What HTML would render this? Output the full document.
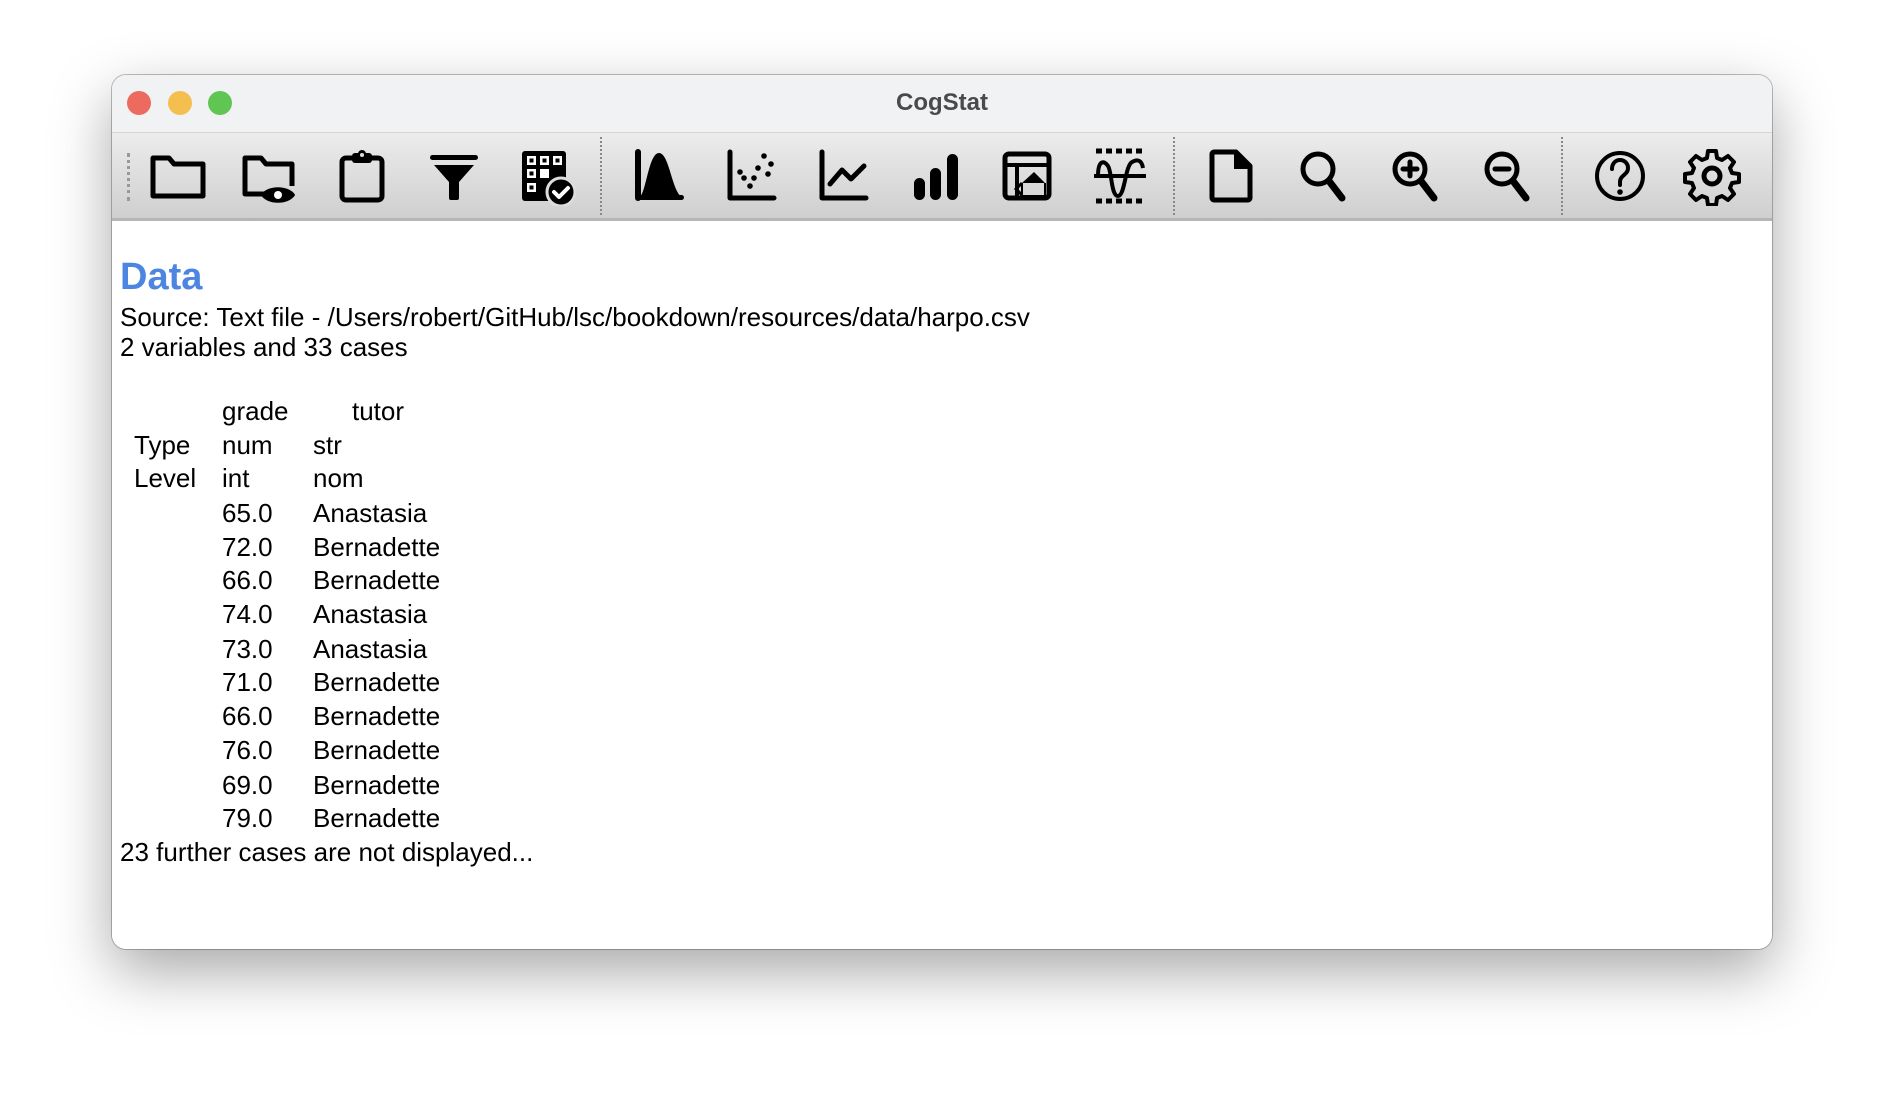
<!DOCTYPE html>
<html><head><meta charset="utf-8"><style>
body{margin:0;width:1884px;height:1100px;background:#fff;position:relative;overflow:hidden;font-family:"Liberation Sans",Arial,sans-serif}
.win{position:absolute;left:112px;top:75px;width:1660px;height:874px;border-radius:14px;background:#fff;box-shadow:0 22px 60px rgba(0,0,0,.35),0 0 0 1px rgba(0,0,0,.25);overflow:hidden}
.title{position:absolute;left:0;top:0;width:100%;height:57px;background:#f1f2f4;border-bottom:1px solid #d6d6d6}
.title span{position:absolute;left:0;width:100%;text-align:center;top:14px;font-size:24px;font-weight:bold;color:#4a4a4a}
.dot{position:absolute;top:16px;width:24px;height:24px;border-radius:50%}
.tb{position:absolute;left:0;top:58px;width:100%;height:85px;background:linear-gradient(#ececec,#cfcfcf);border-bottom:3px solid #b5b5b5}
.sep{position:absolute;top:4px;height:78px;border-left:2px dotted #888}
.ic{position:absolute;top:13px;width:60px;height:60px}
.content{position:absolute;left:0;top:146px;width:100%;bottom:0;background:#fff}
.l{position:absolute;font-size:26px;line-height:30px;color:#000;white-space:nowrap}
</style></head><body>
<div class="win">
<div class="title"><div class="dot" style="left:15px;background:#ed6a5e"></div><div class="dot" style="left:56px;background:#f5bf4f"></div><div class="dot" style="left:96px;background:#61c554"></div><span>CogStat</span></div>
<div class="tb">
<div class="sep" style="left:15px;border-left:3px dotted #999;height:48px;top:20px"></div>
<div class="sep" style="left:488px"></div><div class="sep" style="left:1061px"></div><div class="sep" style="left:1449px"></div>
<svg class="ic" style="left:36px" viewBox="0 0 60 60" fill="none" stroke="#000" stroke-width="5" stroke-linejoin="round"><path d="M5 12h16l5 6h29v32H5z"/></svg>
<svg class="ic" style="left:128px" viewBox="0 0 60 60" stroke="#000" stroke-width="5" stroke-linejoin="round"><path d="M28 48H5V12h16l5 6h26v22" fill="none"/><path d="M22 49c6-9 26-9 32 0c-6 9-26 9-32 0z" fill="#000" stroke-width="2"/><circle cx="38" cy="49" r="4" fill="#fff" stroke="none"/></svg>
<svg class="ic" style="left:220px" viewBox="0 0 60 60"><rect x="10" y="12" width="40" height="42" rx="4" fill="none" stroke="#000" stroke-width="5"/><rect x="20" y="7" width="20" height="10" rx="3" fill="#000"/><circle cx="30" cy="8" r="4" fill="#000"/><circle cx="30" cy="9" r="2" fill="#ddd"/></svg>
<svg class="ic" style="left:312px" viewBox="0 0 60 60"><rect x="6" y="9" width="48" height="5" rx="2.5"/><path d="M10 19h40L35 36v16a2 2 0 0 1-2 2h-6a2 2 0 0 1-2-2V36z"/></svg>
<svg class="ic" style="left:404px" viewBox="0 0 60 60"><rect x="6" y="5" width="44" height="50" rx="3"/><g fill="#fff"><rect x="11" y="10" width="9" height="9"/><rect x="24" y="10" width="9" height="9"/><rect x="37" y="10" width="9" height="9"/><rect x="11" y="23" width="9" height="9"/><rect x="24" y="23" width="9" height="9"/><rect x="11" y="37" width="9" height="9"/></g><g fill="#000"><rect x="13.5" y="12.5" width="4" height="4"/><rect x="26.5" y="12.5" width="4" height="4"/><rect x="39.5" y="12.5" width="4" height="4"/><rect x="13.5" y="25.5" width="4" height="4"/><rect x="13.5" y="39.5" width="4" height="4"/></g><circle cx="45" cy="46" r="14" fill="#000" stroke="#ddd" stroke-width="3"/><path d="M38 46l5 5 9-9" fill="none" stroke="#fff" stroke-width="4" stroke-linecap="round" stroke-linejoin="round"/></svg>
<svg class="ic" style="left:518px" viewBox="0 0 60 60"><path d="M8 6v46" stroke="#000" stroke-width="6" stroke-linecap="round"/><path d="M8 52C16 52 18 7 29 7S42 50 54 52z"/><rect x="6" y="49" width="48" height="5" rx="2.5"/></svg>
<svg class="ic" style="left:610px" viewBox="0 0 60 60"><path d="M8 6v46h44" fill="none" stroke="#000" stroke-width="5" stroke-linecap="round" stroke-linejoin="round"/><g fill="#000"><circle cx="42" cy="10" r="2.8"/><circle cx="49" cy="18" r="2.8"/><circle cx="36" cy="22" r="2.8"/><circle cx="46" cy="28" r="2.8"/><circle cx="22" cy="32" r="2.8"/><circle cx="32" cy="32" r="2.8"/><circle cx="28" cy="40" r="2.8"/><circle cx="18" cy="26" r="2.8"/></g></svg>
<svg class="ic" style="left:702px" viewBox="0 0 60 60" fill="none" stroke="#000" stroke-width="5" stroke-linecap="round" stroke-linejoin="round"><path d="M8 6v46h44"/><path d="M16 38l12-14 9 9 13-13"/></svg>
<svg class="ic" style="left:794px" viewBox="0 0 60 60"><rect x="8" y="32" width="11" height="22" rx="5.5"/><rect x="24" y="22" width="11" height="32" rx="5.5"/><rect x="41" y="8" width="11" height="46" rx="5.5"/></svg>
<svg class="ic" style="left:886px" viewBox="0 0 60 60"><rect x="7" y="8" width="44" height="44" rx="4" fill="none" stroke="#000" stroke-width="5"/><path d="M9 19h40M19 19v31" stroke="#000" stroke-width="4"/><path d="M36 26l11 11H24z"/><path d="M24 37v13h23V37" fill="none" stroke="#000" stroke-width="2"/><path d="M24 37l-6 6 6 6" fill="none" stroke="#000" stroke-width="3"/></svg>
<svg class="ic" style="left:978px" viewBox="0 0 60 60"><path d="M6 5h48M6 55h48" stroke="#000" stroke-width="5" stroke-dasharray="6 4"/><path d="M4 30h52" stroke="#000" stroke-width="4"/><path d="M8 30c0-16 6-16 10-10s3 30 10 30 7-30 14-34 10 0 11 6" fill="none" stroke="#000" stroke-width="4"/></svg>
<svg class="ic" style="left:1090px" viewBox="0 0 60 60"><path d="M12 6h22l14 14v32a2 2 0 0 1-2 2H12a2 2 0 0 1-2-2V8a2 2 0 0 1 2-2z" fill="none" stroke="#000" stroke-width="5" stroke-linejoin="round"/><path d="M32 6h3l13 14v3H32z"/></svg>
<svg class="ic" style="left:1182px" viewBox="0 0 60 60" fill="none" stroke="#000" stroke-linecap="round"><circle cx="24" cy="23" r="15" stroke-width="5"/><path d="M35 35l13 17" stroke-width="7"/></svg>
<svg class="ic" style="left:1274px" viewBox="0 0 60 60" fill="none" stroke="#000" stroke-linecap="round"><circle cx="24" cy="23" r="15" stroke-width="5"/><path d="M35 35l13 17" stroke-width="7"/><path d="M24 16v14M17 23h14" stroke-width="5"/></svg>
<svg class="ic" style="left:1366px" viewBox="0 0 60 60" fill="none" stroke="#000" stroke-linecap="round"><circle cx="24" cy="23" r="15" stroke-width="5"/><path d="M35 35l13 17" stroke-width="7"/><path d="M17 23h14" stroke-width="5"/></svg>
<svg class="ic" style="left:1478px" viewBox="0 0 60 60"><circle cx="30" cy="30" r="23" fill="none" stroke="#000" stroke-width="4"/><path d="M22 23c0-6 4-9 8-9s8 3 8 8c0 7-8 7-8 14v3" fill="none" stroke="#000" stroke-width="4" stroke-linecap="round"/><circle cx="30" cy="46" r="2.8"/></svg>
<svg class="ic" style="left:1570px" viewBox="0 0 60 60"><g fill="none" stroke="#000" stroke-width="4" stroke-linejoin="round"><path d="M26 5h8l1 7 5 2 6-4 6 6-4 6 2 5 7 1v8l-7 1-2 5 4 6-6 6-6-4-5 2-1 7h-8l-1-7-5-2-6 4-6-6 4-6-2-5-7-1v-8l7-1 2-5-4-6 6-6 6 4 5-2z"/><circle cx="30" cy="30" r="8" stroke-width="5"/></g></svg>
</div>
<div class="content"></div>
</div>
<div class="l" style="left:120px;top:255px;font-size:38px;line-height:44px;font-weight:bold;color:#4c86e0">Data</div>
<div class="l" style="left:120px;top:302px">Source: Text file - /Users/robert/GitHub/lsc/bookdown/resources/data/harpo.csv</div>
<div class="l" style="left:120px;top:332px">2 variables and 33 cases</div>
<div class="l" style="left:222px;top:396px">grade</div><div class="l" style="left:352px;top:396px">tutor</div>
<div class="l" style="left:134px;top:430px">Type</div><div class="l" style="left:222px;top:430px">num</div><div class="l" style="left:313px;top:430px">str</div>
<div class="l" style="left:134px;top:463px">Level</div><div class="l" style="left:222px;top:463px">int</div><div class="l" style="left:313px;top:463px">nom</div>
<div class="l" style="left:222px;top:498px">65.0</div><div class="l" style="left:313px;top:498px">Anastasia</div>
<div class="l" style="left:222px;top:532px">72.0</div><div class="l" style="left:313px;top:532px">Bernadette</div>
<div class="l" style="left:222px;top:565px">66.0</div><div class="l" style="left:313px;top:565px">Bernadette</div>
<div class="l" style="left:222px;top:599px">74.0</div><div class="l" style="left:313px;top:599px">Anastasia</div>
<div class="l" style="left:222px;top:634px">73.0</div><div class="l" style="left:313px;top:634px">Anastasia</div>
<div class="l" style="left:222px;top:667px">71.0</div><div class="l" style="left:313px;top:667px">Bernadette</div>
<div class="l" style="left:222px;top:701px">66.0</div><div class="l" style="left:313px;top:701px">Bernadette</div>
<div class="l" style="left:222px;top:735px">76.0</div><div class="l" style="left:313px;top:735px">Bernadette</div>
<div class="l" style="left:222px;top:770px">69.0</div><div class="l" style="left:313px;top:770px">Bernadette</div>
<div class="l" style="left:222px;top:803px">79.0</div><div class="l" style="left:313px;top:803px">Bernadette</div>
<div class="l" style="left:120px;top:837px">23 further cases are not displayed...</div>
</body></html>
